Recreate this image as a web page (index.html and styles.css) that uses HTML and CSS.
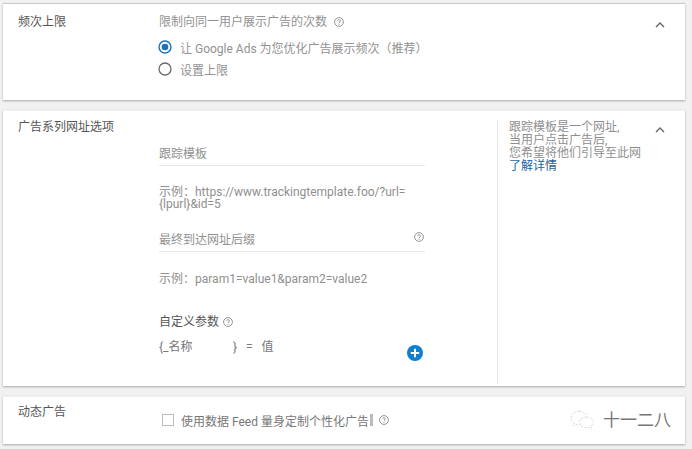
FILE: index.html
```html
<!DOCTYPE html>
<html lang="zh-CN">
<head>
<meta charset="utf-8">
<title>广告系列设置</title>
<link rel="stylesheet" href="styles.css">
</head>
<body>
<section class="card card-freq">
  <h2 class="title">频次上限</h2>
  <div class="main">
    <p class="lead">限制向同一用户展示广告的次数 <svg class="help" viewBox="0 0 12 12"><circle cx="6" cy="6" r="4.4"/><path d="M4.600 4.900c.2-1.700 2.900-1.500 2.800.1 0 1-1.400 1-1.400 2.200M6 8.200v.8"/></svg></p>
    <label class="radio-row">
      <svg class="radio" viewBox="0 0 14 14"><circle class="ring-on" cx="7" cy="7" r="6"/><circle class="dot" cx="7" cy="7" r="3.3"/></svg>
      <span>让 Google Ads 为您优化广告展示频次（推荐）</span>
    </label>
    <label class="radio-row">
      <svg class="radio" viewBox="0 0 14 14"><circle class="ring-off" cx="7" cy="7" r="6"/></svg>
      <span>设置上限</span>
    </label>
  </div>
  <svg class="chev" viewBox="0 0 10 6"><path d="M1 5l4-4 4 4"/></svg>
</section>

<section class="card card-url">
  <h2 class="title">广告系列网址选项</h2>
  <div class="main">
    <div class="field field-a"><span>跟踪模板</span></div>
    <p class="hint hint-a">示例：https://www.trackingtemplate.foo/?url=<br>{lpurl}&amp;id=5</p>
    <div class="field field-b"><span>最终到达网址后缀</span><svg class="help" viewBox="0 0 12 12"><circle cx="6" cy="6" r="4.4"/><path d="M4.600 4.900c.2-1.700 2.900-1.500 2.800.1 0 1-1.400 1-1.400 2.200M6 8.200v.8"/></svg></div>
    <p class="hint hint-b">示例：param1=value1&amp;param2=value2</p>
    <p class="subhead">自定义参数 <svg class="help" viewBox="0 0 12 12"><circle cx="6" cy="6" r="4.4"/><path d="M4.600 4.900c.2-1.700 2.900-1.500 2.800.1 0 1-1.400 1-1.400 2.200M6 8.200v.8"/></svg></p>
    <div class="param-row">
      <div class="param"><span class="param-name">{_名称</span><span class="param-rest">} = 值</span></div>
      <svg class="add" viewBox="0 0 16 16"><circle cx="8" cy="8" r="8"/><path d="M8 3.800v8.400M3.800 8h8.400"/></svg>
    </div>
  </div>
  <aside class="side">
    <p>跟踪模板是一个网址,<br>当用户点击广告后,<br>您希望将他们引导至此网<br><a href="#">了解详情</a></p>
  </aside>
  <svg class="chev" viewBox="0 0 10 6"><path d="M1 5l4-4 4 4"/></svg>
</section>

<section class="card card-dyn">
  <h2 class="title">动态广告</h2>
  <div class="main dyn-row">
    <span class="check"></span>
    <span>使用数据 Feed 量身定制个性化广告</span><span class="caret"></span>
    <svg class="help" viewBox="0 0 12 12"><circle cx="6" cy="6" r="4.4"/><path d="M4.600 4.900c.2-1.700 2.900-1.500 2.800.1 0 1-1.400 1-1.400 2.200M6 8.200v.8"/></svg>
  </div>
  <div class="mark">
    <svg class="mark-icon" viewBox="0 0 30 22"><path d="M11 2c-5 0-9 3.200-9 7 0 2.200 1.300 4 3.200 5.300L4.500 17l3-1.500c1 .3 2.200.5 3.500.5M10 2c4 0 7.500 2 8.500 5"/><path d="M18 8c-4 0-7 2.400-7 5.400s3 5.400 7 5.400c1 0 1.800-.1 2.600-.4l2.400 1.300-.6-2.200c1.600-1 2.600-2.500 2.600-4.100M18 8c3 0 6 1.500 7 4"/></svg>
    <span>十一二八</span>
  </div>
</section>
</body>
</html>
```
FILE: styles.css
```css
* { box-sizing: border-box; }
html, body { margin: 0; padding: 0; }
body {
  width: 692px;
  height: 449px;
  overflow: hidden;
  background: #f1f1f1;
  padding: 3px 7px 0 3px;
  font-family: Roboto, "Noto Sans CJK SC", sans-serif;
  font-size: 12px;
  color: #8a8a8a;
}
h2, p { margin: 0; font-weight: 400; }
.card {
  display: flex;
  background: #fff;
  border-top: 1px solid #c9c9c9;
  box-shadow: 0 1px 2px #a9a9a9;
  position: relative;
}
.card-freq { height: 97px; margin-bottom: 10px; }
.card-url { height: 276px; margin-bottom: 10px; border-top-color: #f1f1f1; }
.card-dyn { height: 48px; border-top-color: #f1f1f1; }
.title {
  width: 156px;
  flex: none;
  padding: 10px 0 0 15px;
  font-size: 12px;
  line-height: 16px;
  color: #555;
}
.card-url .title { padding-top: 8px; }
.card-dyn .title { padding-top: 7px; }
.main { width: 266px; flex: none; }
.help {
  width: 12px;
  height: 12px;
  vertical-align: -2px;
  fill: none;
  stroke: #8a8a8a;
  stroke-width: .9;
}
.chev {
  position: absolute;
  right: 20px;
  top: 18px;
  width: 10px;
  height: 6px;
  fill: none;
  stroke: #666;
  stroke-width: 1.4;
}
.card-url .chev { top: 16px; }

.card-freq .main { padding-top: 10px; }
.lead { line-height: 16px; margin-bottom: 6px; color: #929292; }
.lead .help { margin-left: 3px; }
.radio-row { display: flex; align-items: center; gap: 8px; height: 22px; margin-left: -1px; color: #929292; }
.radio { width: 14px; height: 14px; flex: none; }
.ring-on { fill: #fff; stroke: #1a73b8; stroke-width: 1.4; }
.ring-off { fill: #fff; stroke: #6a6a6a; stroke-width: 1.3; }
.dot { fill: #1a73b8; }

.field {
  display: flex;
  justify-content: space-between;
  align-items: flex-start;
  height: 20px;
  border-bottom: 1px solid #e8e8e8;
  line-height: 16px;
  color: #929292;
}
.field-a { margin-top: 35px; }
.field-b { margin-top: 22px; }
.field-b .help { margin-top: -1px; }
.hint { line-height: 12px; color: #8f8f8f; }
.hint-a { margin-top: 20px; }
.hint-b { margin-top: 21px; }
.subhead { margin-top: 29px; line-height: 16px; color: #555; }
.param-row { position: relative; margin-top: 9px; height: 28px; }
.param { display: flex; line-height: 16px; color: #777; }
.param-name { width: 74px; }
.param-rest { word-spacing: 6px; }
.add {
  position: absolute;
  right: 2px;
  top: 6px;
  width: 16px;
  height: 16px;
}
.add circle { fill: #0d80cf; }
.add path { stroke: #fff; stroke-width: 2; fill: none; }

.side {
  margin-left: 72px;
  width: 188px;
  height: 264px;
  margin-top: 9px;
  border-left: 1px solid #e8e8e8;
  padding: 1px 0 0 11px;
  line-height: 13px;
  color: #8f8f8f;
}
.side a { color: #17649f; text-decoration: none; }

.dyn-row {
  display: flex;
  align-items: center;
  align-self: flex-start;
  margin: 13px 0 0 3px;
  height: 20px;
  width: auto;
  color: #777;
}
.check { width: 12px; height: 12px; border: 1px solid #bdbdbd; margin-right: 7px; flex: none; }
.caret { width: 3px; height: 12px; background: #bbb; margin: 0 5px 0 1px; }
.mark {
  position: absolute;
  right: 14px;
  top: 11px;
  display: flex;
  align-items: center;
  gap: 5px;
  font-size: 17px;
  line-height: 24px;
  color: #777;
}
.mark-icon { width: 29px; height: 22px; fill: none; stroke: #c4c4c4; stroke-width: .7; stroke-dasharray: 2 1.5; }
```
